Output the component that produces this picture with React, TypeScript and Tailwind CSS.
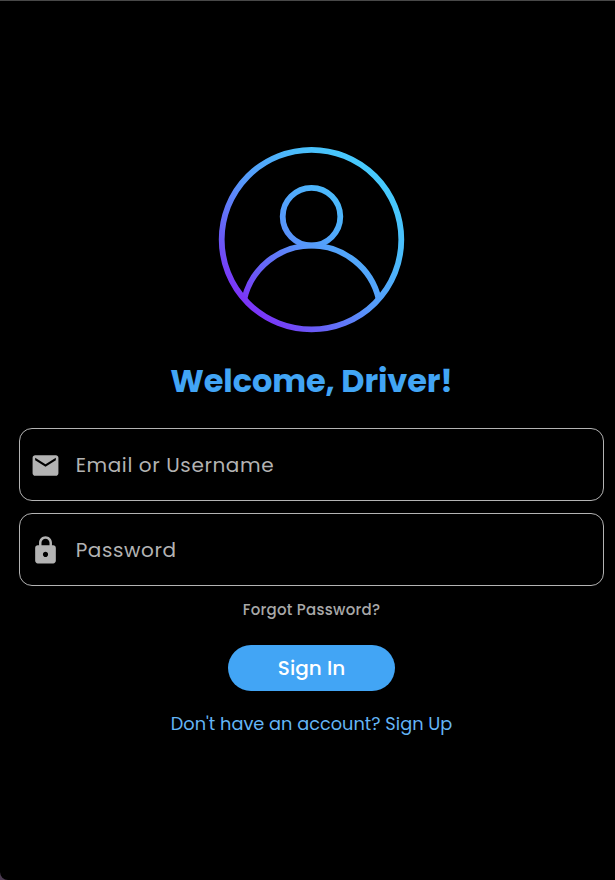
import type { ReactNode } from "react";

function Avatar() {
  return (
    <svg className="size-[187px] shrink-0" viewBox="218 146 187 187" fill="none">
      <defs>
        <linearGradient id="ring" gradientUnits="userSpaceOnUse" x1="247.5" y1="303.5" x2="375.5" y2="175.5">
          <stop offset="0" stopColor="#7b35f8" />
          <stop offset="0.15" stopColor="#6a5af6" />
          <stop offset="0.46" stopColor="#5699fb" />
          <stop offset="0.78" stopColor="#4bbcfb" />
          <stop offset="1" stopColor="#47cafd" />
        </linearGradient>
      </defs>
      <g stroke="url(#ring)" strokeWidth="5.8">
        <circle cx="311.5" cy="239.6" r="89.8" />
        <circle cx="311.5" cy="216.6" r="28.8" />
        <path d="M244.3 299 A69 69 0 0 1 378.7 299" />
      </g>
    </svg>
  );
}

function Field({ icon, label }: { icon: string; label: ReactNode }) {
  return (
    <label className="flex h-[73px] w-full items-center rounded-[13px] border border-[#b3b3b3] pl-[9.5px]">
      <svg className="mt-px size-[31px] shrink-0" viewBox="0 0 24 24" fill="#b3b3b3">
        <path d={icon} />
      </svg>
      <span className="ml-[15.2px] text-[20px] leading-none tracking-[0.6px] text-[#b3b3b3]">{label}</span>
    </label>
  );
}

const mail =
  "M20 4H4c-1.1 0-1.99.9-1.99 2L2 18c0 1.1.9 2 2 2h16c1.1 0 2-.9 2-2V6c0-1.1-.9-2-2-2zm0 4l-8 5-8-5V6l8 5 8-5v2z";
const lock =
  "M18 8h-1V6c0-2.76-2.24-5-5-5S7 3.24 7 6v2H6c-1.1 0-2 .9-2 2v10c0 1.1.9 2 2 2h12c1.1 0 2-.9 2-2V10c0-1.1-.9-2-2-2zm-6 9c-1.1 0-2-.9-2-2s.9-2 2-2 2 .9 2 2-.9 2-2 2zm3.1-9H8.9V6c0-1.71 1.39-3.1 3.1-3.1 1.71 0 3.1 1.39 3.1 3.1v2z";

export default function App() {
  return (
    <div className="h-[880px] w-[615px] bg-[#4a3a50]">
      <main className="flex h-full w-full flex-col items-center overflow-hidden rounded-bl-[8px] whitespace-nowrap bg-black pl-[19px] pr-[11px] pt-[146px] font-['Poppins','Inter',sans-serif] shadow-[inset_0_1px_0_#484848]">
        <Avatar />
        <h1 className="mt-[28px] h-10 text-[32px] leading-10 font-bold tracking-[-0.12px] text-[#42a5f5]">Welcome, Driver!</h1>
        <form className="mt-[27px] flex w-full flex-col items-center">
          <Field icon={mail} label="Email or Username" />
          <div className="h-3" />
          <Field icon={lock} label="Password" />
          <a className="mt-[14px] h-5 text-[15px] leading-5 font-medium tracking-[0.26px] text-[#a8a8a8]">Forgot Password?</a>
          <button type="button" className="mt-[25px] h-[46px] w-[167px] rounded-full bg-[#42a5f5] text-[20px] font-medium text-white">
            Sign In
          </button>
          <a className="mt-[21px] h-6 text-[17.75px] leading-6 text-[#64b5f6]">Don't have an account? Sign Up</a>
        </form>
      </main>
    </div>
  );
}
